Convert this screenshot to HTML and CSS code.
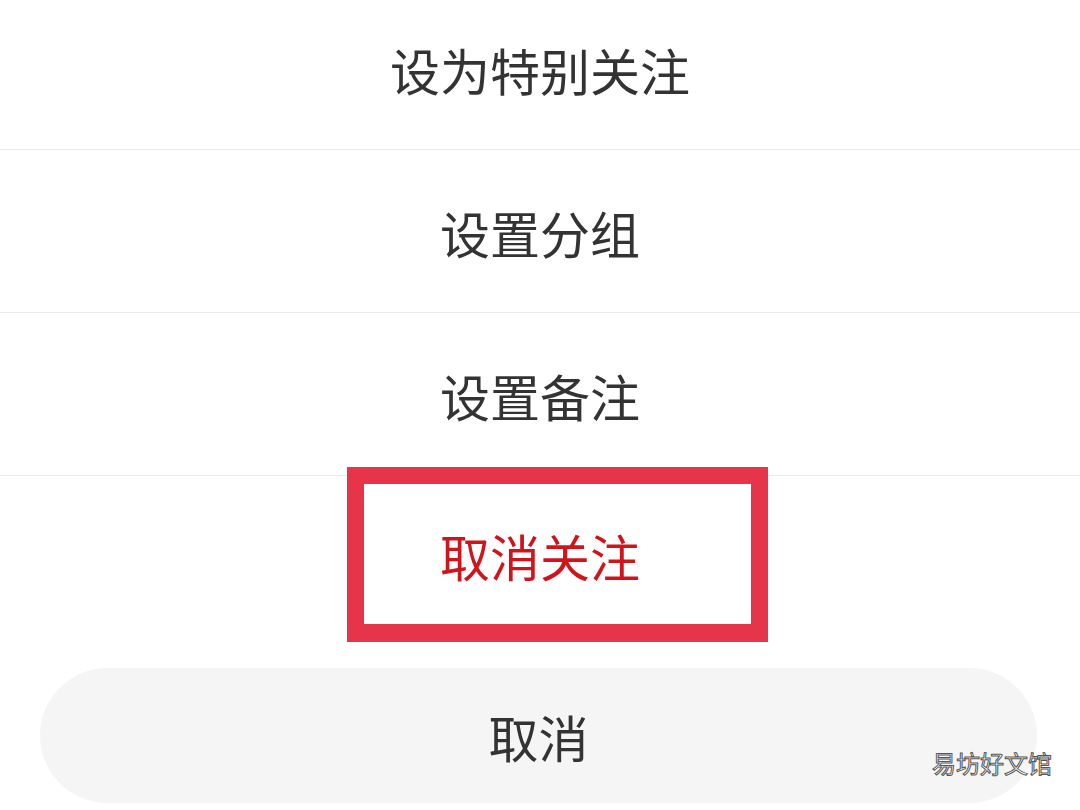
FILE: index.html
```html
<!DOCTYPE html>
<html>
<head>
    <title>关注操作</title>
    <link rel="stylesheet" href="styles.css">
</head>
<body>
    <div class="sheet">
        <div class="menu">
            <div class="item">设为特别关注</div>
            <div class="item">设置分组</div>
            <div class="item">设置备注</div>
            <div class="item item-danger">
                取消关注
                <span class="highlight"></span>
            </div>
        </div>
        <div class="cancel">取消</div>
        <span class="watermark">易坊好文馆</span>
    </div>
</body>
</html>
```

FILE: styles.css
```css
* { margin: 0; padding: 0; box-sizing: border-box; }
html, body { width: 1080px; height: 810px; overflow: hidden; background: #fff; }
body { font-family: "Noto Sans CJK SC", "Noto Sans", sans-serif; color: #333; }
.sheet { position: relative; height: 810px; }
.menu { margin-top: -13px; }
.item { height: 163px; padding-top: 2px; display: flex; align-items: center; justify-content: center; font-size: 50px; border-bottom: 1px solid #ebebeb; position: relative; }
.item-danger { height: 164px; padding-top: 0; padding-bottom: 6px; border-bottom: none; color: #d0141c; }
.highlight { position: absolute; left: 347px; top: -9px; width: 421px; height: 175px; border: 17px solid #e6354a; border-bottom-width: 18px; }
.cancel { margin: 28px 43px 0 40px; height: 135px; border-radius: 68px; background: #f5f5f5; display: flex; align-items: center; justify-content: center; font-size: 50px; color: #333; }
.watermark { position: absolute; right: 28px; bottom: 17px; font-size: 24px; color: #fff; -webkit-text-stroke: 1px #555; }
```
